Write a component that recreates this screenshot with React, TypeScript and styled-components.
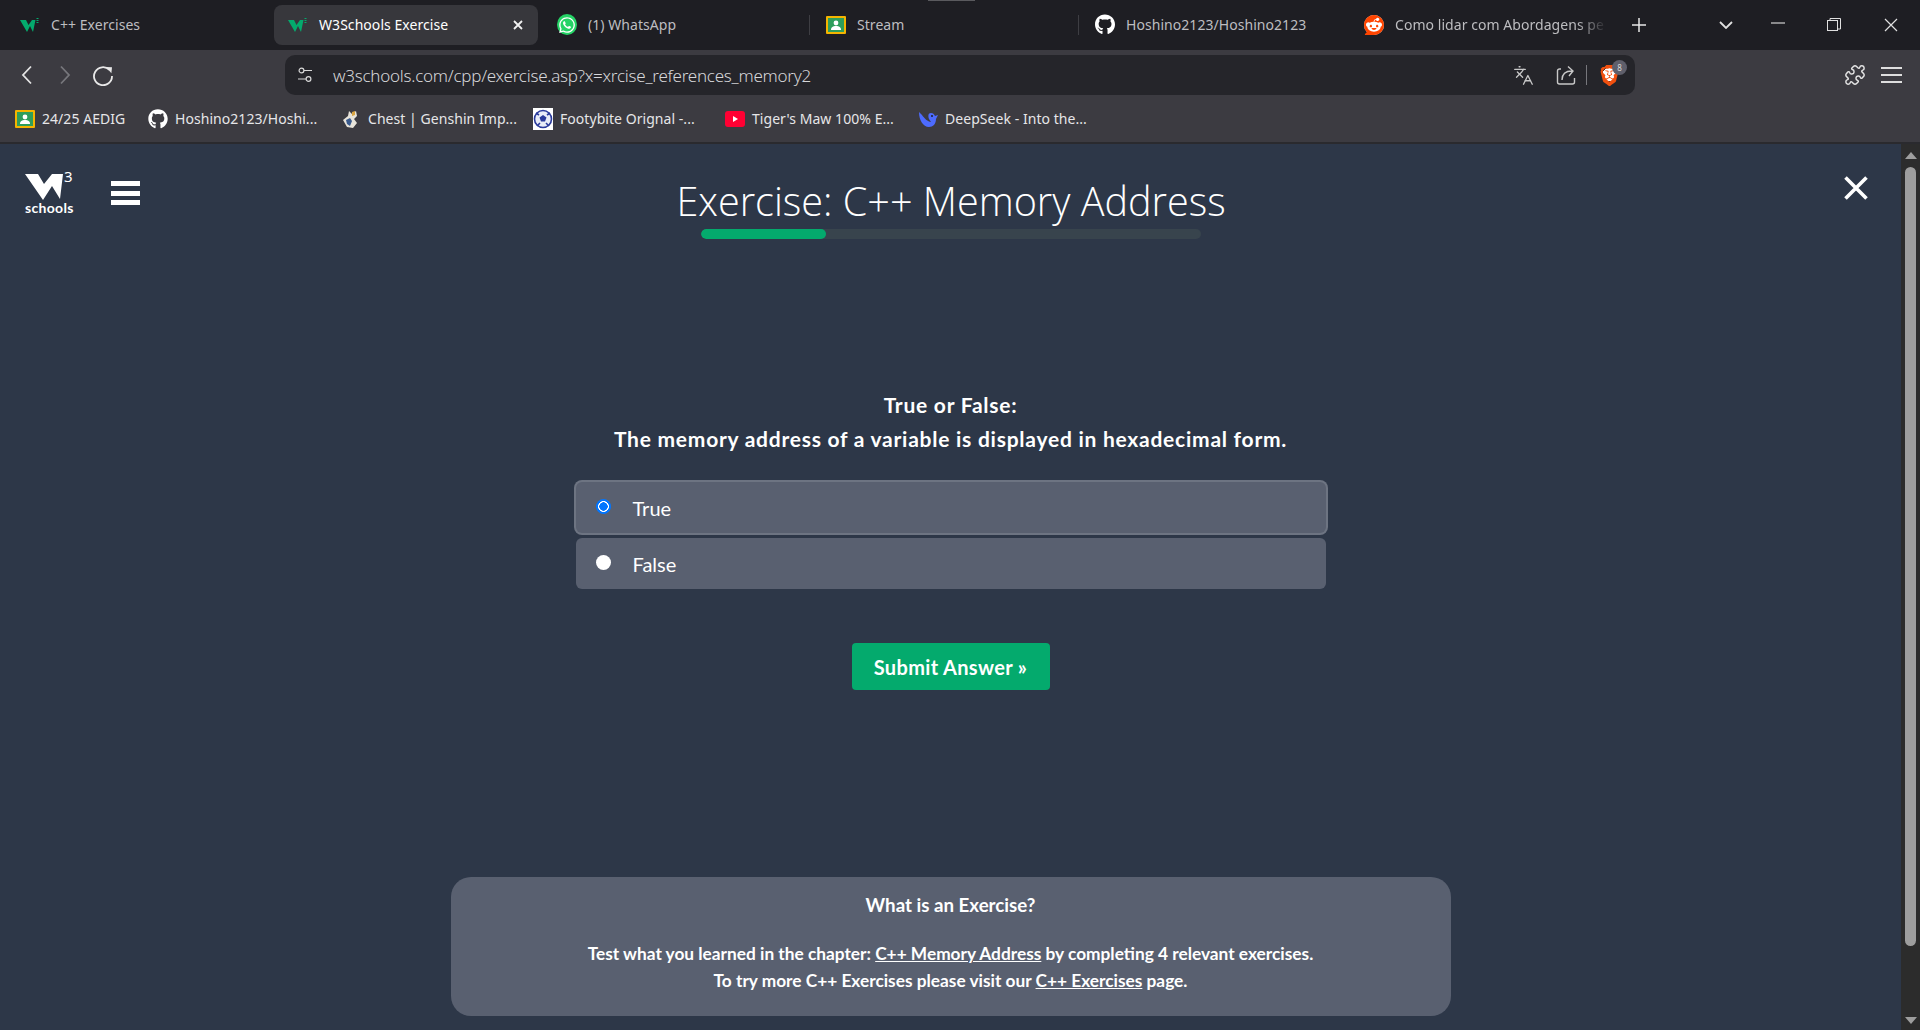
import React from "react";
import styled, { createGlobalStyle } from "styled-components";
import { FaGithub, FaWhatsapp } from "react-icons/fa";
import { SiBrave, SiReddit } from "react-icons/si";
import { Languages, Puzzle } from "lucide-react";

const GlobalStyle = createGlobalStyle`
    html, body {
        margin: 0;
        padding: 0;
        width: 1920px;
        height: 1030px;
        overflow: hidden;
        background: #2d3748;
    }
    * {
        box-sizing: border-box;
    }
`;

function W3Mark({ size = 16 }: { size?: number }) {
    return (
        <svg width={size + 4} height={size} viewBox="0 0 20 16">
            <polygon points="0,3 6,3 8.5,8 12,3 15.5,3 13,15 10,9 7,15" fill="#04aa6d" />
            <rect x="16.5" y="1" width="2" height="1" fill="#04aa6d" />
            <rect x="16.5" y="3" width="2" height="1" fill="#04aa6d" />
            <rect x="16.5" y="5" width="2" height="1" fill="#04aa6d" />
        </svg>
    );
}

function ClassroomIcon() {
    return (
        <svg width="20" height="20" viewBox="0 0 20 20">
            <rect x="0" y="1" width="20" height="18" rx="1" fill="#f4b400" />
            <rect x="2" y="3" width="16" height="14" fill="#2e9e5b" />
            <circle cx="10" cy="8" r="2.4" fill="#ffffff" />
            <path d="M5 15c0-3 2-4 5-4s5 1 5 4z" fill="#ffffff" />
        </svg>
    );
}

function ChestIcon() {
    return (
        <svg width="20" height="20" viewBox="0 0 20 20">
            <path d="M2 11l5-4 1-5 3 3 4-3 1 5-3 3 3 4-4 5-6-1z" fill="#e8e4da" />
            <path d="M5 11l4-2 2 3-2 5-3-2z" fill="#3a5a8c" />
            <path d="M11 3l3-1 0 4-3 1z" fill="#d9a441" />
        </svg>
    );
}

function BallIcon() {
    return (
        <svg width="20" height="22" viewBox="0 0 20 22">
            <rect width="20" height="22" fill="#ffffff" />
            <circle cx="10" cy="11" r="8.5" fill="#e8ecf8" stroke="#2a3a9c" strokeWidth="1.6" />
            <polygon points="10,7 13.5,9.5 12,13.5 8,13.5 6.5,9.5" fill="#2a3a9c" />
            <path d="M3 5l3 2M17 5l-3 2M4 18l3-3M16 18l-3-3" stroke="#2a3a9c" strokeWidth="1.6" />
        </svg>
    );
}

function YoutubeIcon() {
    return (
        <svg width="20" height="18" viewBox="0 0 20 18">
            <rect x="0" y="1" width="20" height="16" rx="3" fill="#ff0033" />
            <polygon points="8,6 13,9 8,12" fill="#ffffff" />
        </svg>
    );
}

function DeepSeekIcon() {
    return (
        <svg width="20" height="20" viewBox="0 0 20 20">
            <path
                d="M1 3c0 8 4 15 10 15 4 0 7-3 7-8l2-4-3 1c-1-2-2-3-4-3-3 0-3 3-2 6l2 3c-3 0-7-4-9-7z"
                fill="#4d6bfe"
            />
            <circle cx="14" cy="7" r="1" fill="#1e1e23" />
        </svg>
    );
}

export default function App() {
    const tabs = [
        { title: "C++ Exercises", icon: <W3Mark /> },
        { title: "W3Schools Exercise", icon: <W3Mark />, active: true },
        { title: "(1) WhatsApp", icon: <WhatsappCircle><FaWhatsapp size={18} /></WhatsappCircle> },
        { title: "Stream", icon: <ClassroomIcon />, divider: true, hoverBar: true },
        { title: "Hoshino2123/Hoshino2123", icon: <FaGithub size={21} color="#ffffff" />, divider: true },
        { title: "Como lidar com Abordagens pe", icon: <RedditCircle><SiReddit size={20} color="#ff4500" /></RedditCircle>, fade: true },
    ];

    const bookmarks = [
        { title: "24/25 AEDIG", icon: <ClassroomIcon />, width: 133 },
        { title: "Hoshino2123/Hoshi...", icon: <FaGithub size={20} color="#ffffff" />, width: 193 },
        { title: "Chest | Genshin Imp...", icon: <ChestIcon />, width: 192 },
        { title: "Footybite Orignal -...", icon: <BallIcon />, width: 192 },
        { title: "Tiger's Maw 100% E...", icon: <YoutubeIcon />, width: 193 },
        { title: "DeepSeek - Into the...", icon: <DeepSeekIcon />, width: 180 },
    ];

    return (
        <Screen>
            <GlobalStyle />
            <TabStrip>
                {tabs.map((tab) => (
                    <Tab key={tab.title} $active={tab.active} $divider={tab.divider}>
                        {tab.hoverBar && <HoverBar />}
                        <TabIcon>{tab.icon}</TabIcon>
                        <TabTitle $active={tab.active} $fade={tab.fade}>{tab.title}</TabTitle>
                        {tab.active && (
                            <svg width="10" height="10" viewBox="0 0 10 10">
                                <path d="M1 1l8 8M9 1l-8 8" stroke="#f2f2f2" strokeWidth="1.8" />
                            </svg>
                        )}
                    </Tab>
                ))}
                <NewTab>
                    <svg width="14" height="14" viewBox="0 0 14 14">
                        <path d="M7 0v14M0 7h14" stroke="#e8e8e8" strokeWidth="1.5" />
                    </svg>
                </NewTab>
                <WindowControls>
                    <WindowButton $width={48}>
                        <svg width="14" height="8" viewBox="0 0 14 8">
                            <path d="M1 1l6 6 6-6" fill="none" stroke="#e0e0e0" strokeWidth="1.8" />
                        </svg>
                    </WindowButton>
                    <WindowButton $width={56}>
                        <svg width="14" height="14" viewBox="0 0 14 14">
                            <path d="M0 5h14" stroke="#d0d0d0" strokeWidth="1.2" />
                        </svg>
                    </WindowButton>
                    <WindowButton $width={56}>
                        <svg width="14" height="14" viewBox="0 0 14 14">
                            <rect x="0.5" y="2.5" width="10" height="10" fill="none" stroke="#e0e0e0" />
                            <path d="M3 2.5V0.5h10.5V11h-2.5" fill="none" stroke="#e0e0e0" />
                        </svg>
                    </WindowButton>
                    <WindowButton $width={58}>
                        <svg width="14" height="14" viewBox="0 0 14 14">
                            <path d="M1 1l12 12M13 1L1 13" stroke="#e0e0e0" strokeWidth="1.2" />
                        </svg>
                    </WindowButton>
                </WindowControls>
            </TabStrip>

            <Toolbar>
                <NavButton>
                    <svg width="12" height="20" viewBox="0 0 12 20">
                        <path d="M10 1.5L2 10l8 8.5" fill="none" stroke="#e4e4e4" strokeWidth="1.8" />
                    </svg>
                </NavButton>
                <NavButton>
                    <svg width="12" height="20" viewBox="0 0 12 20">
                        <path d="M2 1.5l8 8.5-8 8.5" fill="none" stroke="#77777c" strokeWidth="1.8" />
                    </svg>
                </NavButton>
                <NavButton>
                    <svg width="22" height="22" viewBox="0 0 22 22">
                        <path d="M17.5 6A9 9 0 1 0 20 12" fill="none" stroke="#e8e8e8" strokeWidth="1.8" />
                        <path d="M14 3l6 .2-.6 6z" fill="#e8e8e8" />
                    </svg>
                </NavButton>
                <AddressBar>
                    <svg width="14" height="16" viewBox="0 0 14 16">
                        <circle cx="3.5" cy="3.5" r="2.4" fill="none" stroke="#d8d8d8" strokeWidth="1.2" />
                        <path d="M6 3.5h8M0 12h8" stroke="#d8d8d8" strokeWidth="1.2" />
                        <circle cx="10.5" cy="12" r="2.4" fill="none" stroke="#d8d8d8" strokeWidth="1.2" />
                    </svg>
                    <AddressText>w3schools.com/cpp/exercise.asp?x=xrcise_references_memory2</AddressText>
                    <AddressActions>
                        <TranslateIcon size={21} color="#c8c8c8" strokeWidth={1.5} />
                        <svg width="20" height="20" viewBox="0 0 20 20">
                            <path d="M5 4H3.5a2 2 0 0 0-2 2v11a2 2 0 0 0 2 2h13a2 2 0 0 0 2-2v-4" fill="none" stroke="#c8c8c8" strokeWidth="1.4" />
                            <path d="M6 15c0-6 4-9 10-9M12 1.5l5 4.5-4 5" fill="none" stroke="#c8c8c8" strokeWidth="1.4" />
                        </svg>
                        <AddressSeparator />
                        <BraveButton>
                            <BraveShield><SiBrave size={21} color="#f1500f" /></BraveShield>
                            <ShieldCount>8</ShieldCount>
                        </BraveButton>
                    </AddressActions>
                </AddressBar>
                <ToolbarEnd>
                    <Puzzle size={22} color="#e4e4e4" strokeWidth={1.6} />
                    <MenuLines $width={21} $bar={2} $gap={5} $color="#dedede"><i /><i /><i /></MenuLines>
                </ToolbarEnd>
            </Toolbar>

            <BookmarksBar>
                {bookmarks.map((mark) => (
                    <Bookmark key={mark.title} $width={mark.width}>
                        <BookmarkIcon>{mark.icon}</BookmarkIcon>
                        <BookmarkTitle>{mark.title}</BookmarkTitle>
                    </Bookmark>
                ))}
            </BookmarksBar>

            <Viewport>
                <ExercisePage>
                    <Header>
                        <HeaderLeft>
                            <Logo>
                                <svg width="40" height="28" viewBox="0 0 40 28">
                                    <polygon points="0,1 13,1 19,11 27,1 38,1 35,26 27,13 18,27" fill="#ffffff" />
                                </svg>
                                <LogoThree>3</LogoThree>
                                <LogoWord>schools</LogoWord>
                            </Logo>
                            <HeaderMenu $width={29} $bar={5} $gap={4.5} $color="#ffffff"><i /><i /><i /></HeaderMenu>
                        </HeaderLeft>
                        <HeaderCenter>
                            <Title>Exercise: C++ Memory Address</Title>
                            <ProgressTrack>
                                <ProgressFill style={{ width: "25%" }} />
                            </ProgressTrack>
                        </HeaderCenter>
                        <HeaderRight>
                            <svg width="24" height="24" viewBox="0 0 24 24">
                                <path d="M1.5 1.5l21 21M22.5 1.5l-21 21" stroke="#ffffff" strokeWidth="3.6" />
                            </svg>
                        </HeaderRight>
                    </Header>

                    <Question>
                        True or False:<br />
                        The memory address of a variable is displayed in hexadecimal form.
                    </Question>

                    <Options>
                        <Option $selected>
                            <Radio $selected />
                            <OptionLabel>True</OptionLabel>
                        </Option>
                        <Option>
                            <Radio />
                            <OptionLabel>False</OptionLabel>
                        </Option>
                    </Options>

                    <SubmitButton>Submit Answer »</SubmitButton>

                    <InfoCard>
                        <InfoTitle>What is an Exercise?</InfoTitle>
                        <InfoText>
                            Test what you learned in the chapter: <u>C++ Memory Address</u> by completing 4 relevant exercises.<br />
                            To try more C++ Exercises please visit our <u>C++ Exercises</u> page.
                        </InfoText>
                    </InfoCard>
                </ExercisePage>
                <Scrollbar>
                    <ArrowUp />
                    <ScrollThumb />
                    <ArrowDown />
                </Scrollbar>
            </Viewport>
        </Screen>
    );
}

const chromeFont = `"Noto Sans", "Open Sans", sans-serif`;
const pageFont = `"Lato", "Noto Sans", sans-serif`;

const Screen = styled.div`
    width: 1920px;
    height: 1030px;
    display: flex;
    flex-direction: column;
    overflow: hidden;
`;

const TabStrip = styled.div`
    height: 50px;
    flex: none;
    display: flex;
    align-items: center;
    padding: 0 0 1px 2px;
    background: #1e1e23;
    font-family: ${chromeFont};
`;

const Tab = styled.div<{ $active?: boolean; $divider?: boolean }>`
    position: relative;
    width: ${(p) => (p.$active ? "264px" : "269px")};
    height: 40px;
    flex: none;
    display: flex;
    align-items: center;
    padding-left: ${(p) => (p.$active ? "14px" : "18px")};
    padding-right: ${(p) => (p.$active ? "15px" : "8px")};
    margin: ${(p) => (p.$active ? "0 1px 0 3px" : "0")};
    border-radius: 8px;
    background: ${(p) => (p.$active ? "#37373c" : "transparent")};
    &::before {
        content: "";
        display: ${(p) => (p.$divider ? "block" : "none")};
        position: absolute;
        left: 1px;
        top: 10px;
        height: 20px;
        width: 1px;
        background: #3e3e43;
    }
`;

const HoverBar = styled.span`
    position: absolute;
    left: 120px;
    top: -5px;
    width: 47px;
    height: 1px;
    background: #5a5a5e;
`;

const TabIcon = styled.span`
    width: 20px;
    height: 22px;
    flex: none;
    display: flex;
    align-items: center;
    justify-content: center;
    margin-right: 11px;
`;

const TabTitle = styled.span<{ $active?: boolean; $fade?: boolean }>`
    flex: 1;
    min-width: 0;
    white-space: nowrap;
    font-size: 14px;
    letter-spacing: 0.05px;
    color: ${(p) => (p.$active ? "#ffffff" : "#bdbdc0")};
    mask-image: ${(p) => (p.$fade ? "linear-gradient(90deg, #000 86%, transparent 100%)" : "none")};
`;

const WhatsappCircle = styled.span`
    width: 21px;
    height: 21px;
    display: flex;
    align-items: center;
    justify-content: center;
    border-radius: 50%;
    color: #ffffff;
    background: #25d366;
`;

const RedditCircle = styled.span`
    width: 20px;
    height: 20px;
    display: flex;
    border-radius: 50%;
    background: #ffffff;
`;

const NewTab = styled.div`
    margin-left: 4px;
    width: 40px;
    flex: none;
    display: flex;
    justify-content: center;
`;

const WindowControls = styled.div`
    margin-left: auto;
    display: flex;
    align-self: stretch;
`;

const WindowButton = styled.div<{ $width: number }>`
    width: ${(p) => p.$width}px;
    display: flex;
    align-items: center;
    justify-content: center;
`;

const Toolbar = styled.div`
    height: 45px;
    flex: none;
    display: flex;
    align-items: center;
    padding: 5px 0 0 8px;
    background: #3c3b41;
`;

const NavButton = styled.div`
    width: 38px;
    height: 40px;
    flex: none;
    display: flex;
    align-items: center;
    justify-content: center;
`;

const AddressBar = styled.div`
    width: 1350px;
    height: 40px;
    flex: none;
    display: flex;
    align-items: center;
    margin-left: 163px;
    padding: 0 8px 0 13px;
    border-radius: 10px;
    background: #25252a;
    font-family: ${chromeFont};
`;

const AddressText = styled.span`
    margin-left: 21px;
    font-size: 17px;
    font-weight: 300;
    letter-spacing: -0.24px;
    color: #d6d6d9;
    white-space: nowrap;
`;

const AddressActions = styled.div`
    margin-left: auto;
    display: flex;
    align-items: center;
    gap: 10px;
`;

const TranslateIcon = styled(Languages)`
    margin-right: 12px;
`;

const AddressSeparator = styled.span`
    width: 1px;
    height: 20px;
    background: #77777c;
`;

const BraveButton = styled.span`
    position: relative;
    display: flex;
    width: 28px;
    margin-left: 2px;
`;

const BraveShield = styled.span`
    display: flex;
    border-radius: 50%;
    background: radial-gradient(circle at 50% 45%, #ffffff 0 7px, transparent 7px);
`;

const ShieldCount = styled.span`
    position: absolute;
    left: 13px;
    top: -5px;
    width: 15px;
    height: 15px;
    border-radius: 50%;
    background: #5f5f6b;
    color: #d8d8d8;
    font-size: 8px;
    line-height: 15px;
    text-align: center;
`;

const ToolbarEnd = styled.div`
    margin-left: 209px;
    display: flex;
    align-items: center;
    gap: 15px;
`;

const MenuLines = styled.div<{ $width: number; $bar: number; $gap: number; $color: string }>`
    width: ${(p) => p.$width}px;
    display: flex;
    flex-direction: column;
    gap: ${(p) => p.$gap}px;
    i {
        display: block;
        height: ${(p) => p.$bar}px;
        background: ${(p) => p.$color};
    }
`;

const HeaderMenu = styled(MenuLines)`
    margin-top: 8px;
`;

const BookmarksBar = styled.div`
    height: 49px;
    flex: none;
    display: flex;
    align-items: center;
    padding-left: 15px;
    background: #3c3b41;
    border-bottom: 2px solid #2a2a2e;
    font-family: ${chromeFont};
`;

const Bookmark = styled.div<{ $width: number }>`
    width: ${(p) => p.$width}px;
    flex: none;
    display: flex;
    align-items: center;
    gap: 7px;
`;

const BookmarkIcon = styled.span`
    width: 20px;
    height: 22px;
    display: flex;
    align-items: center;
    justify-content: center;
`;

const BookmarkTitle = styled.span`
    font-size: 14px;
    letter-spacing: 0.05px;
    color: #e6e6e8;
    white-space: nowrap;
`;

const Viewport = styled.div`
    flex: 1;
    min-height: 0;
    display: flex;
`;

const ExercisePage = styled.main`
    flex: 1;
    min-width: 0;
    display: flex;
    flex-direction: column;
    align-items: center;
    background: #2d3748;
    color: #ffffff;
    font-family: ${pageFont};
`;

const Header = styled.header`
    width: 100%;
    display: grid;
    grid-template-columns: 1fr auto 1fr;
    padding-top: 29px;
`;

const HeaderLeft = styled.div`
    display: flex;
    align-items: flex-start;
    padding-left: 25px;
    gap: 21px;
`;

const Logo = styled.div`
    position: relative;
    width: 65px;
    height: 50px;
    svg {
        display: block;
    }
`;

const LogoThree = styled.span`
    position: absolute;
    left: 39px;
    top: -6px;
    font-family: "Noto Sans", sans-serif;
    font-size: 15px;
    line-height: 18px;
`;

const LogoWord = styled.span`
    position: absolute;
    left: 0;
    top: 27px;
    font-size: 14px;
    line-height: 16px;
    font-weight: 700;
    letter-spacing: 0.3px;
`;

const HeaderCenter = styled.div`
    display: flex;
    flex-direction: column;
    align-items: center;
    padding-left: 1px;
`;

const Title = styled.h1`
    margin: 3px 0 0;
    font-family: "Open Sans", sans-serif;
    font-size: 39.6px;
    font-weight: 300;
    line-height: 50px;
`;

const ProgressTrack = styled.div`
    width: 500px;
    height: 10px;
    margin-top: 3px;
    border-radius: 5px;
    background: #38444d;
    overflow: hidden;
`;

const ProgressFill = styled.div`
    height: 100%;
    border-radius: 5px;
    background: #04aa6d;
`;

const HeaderRight = styled.div`
    display: flex;
    justify-content: flex-end;
    padding: 3px 33px 0 0;
`;

const Question = styled.div`
    margin-top: 149px;
    font-size: 21px;
    font-weight: 700;
    letter-spacing: 0.75px;
    line-height: 34px;
    text-align: center;
`;

const Options = styled.div`
    margin-top: 26px;
    width: 750px;
    display: flex;
    flex-direction: column;
    gap: 5px;
`;

const Option = styled.div<{ $selected?: boolean }>`
    height: 51px;
    display: flex;
    align-items: center;
    padding-left: 20px;
    border-radius: 6px;
    background: #596070;
    box-shadow: ${(p) => (p.$selected ? "0 0 0 2px #6d7482" : "none")};
`;

const Radio = styled.span<{ $selected?: boolean }>`
    width: 15px;
    height: 15px;
    border-radius: 50%;
    margin-top: -2px;
    background: ${(p) =>
        p.$selected
            ? "radial-gradient(circle, #0075ff 0 4px, #ffffff 4.4px 5.2px, #0075ff 5.6px)"
            : "#ffffff"};
`;

const OptionLabel = styled.span`
    margin-left: 22px;
    font-size: 20px;
`;

const SubmitButton = styled.button`
    margin-top: 54px;
    width: 198px;
    height: 47px;
    padding: 0;
    border: 0;
    border-radius: 4px;
    background: #04aa6d;
    color: #ffffff;
    font-family: ${pageFont};
    font-size: 20px;
    font-weight: 700;
    letter-spacing: 0.35px;
`;

const InfoCard = styled.section`
    margin-top: auto;
    margin-bottom: 14px;
    width: 1000px;
    height: 139px;
    padding-top: 14px;
    border-radius: 20px;
    background: #596070;
    text-align: center;
`;

const InfoTitle = styled.div`
    font-size: 18.7px;
    font-weight: 700;
    line-height: 28px;
`;

const InfoText = styled.div`
    margin-top: 21px;
    font-size: 17.3px;
    font-weight: 700;
    line-height: 27px;
`;

const Scrollbar = styled.div`
    width: 19px;
    flex: none;
    display: flex;
    flex-direction: column;
    align-items: center;
    padding: 8px 0 6px;
    background: #2c2c2c;
`;

const ArrowUp = styled.span`
    width: 0;
    height: 0;
    border-left: 6px solid transparent;
    border-right: 6px solid transparent;
    border-bottom: 7px solid #9e9e9e;
`;

const ArrowDown = styled.span`
    width: 0;
    height: 0;
    margin-top: auto;
    border-left: 6px solid transparent;
    border-right: 6px solid transparent;
    border-top: 7px solid #9e9e9e;
`;

const ScrollThumb = styled.span`
    width: 11px;
    height: 779px;
    margin-top: 8px;
    border-radius: 6px;
    background: #9e9e9e;
`;
